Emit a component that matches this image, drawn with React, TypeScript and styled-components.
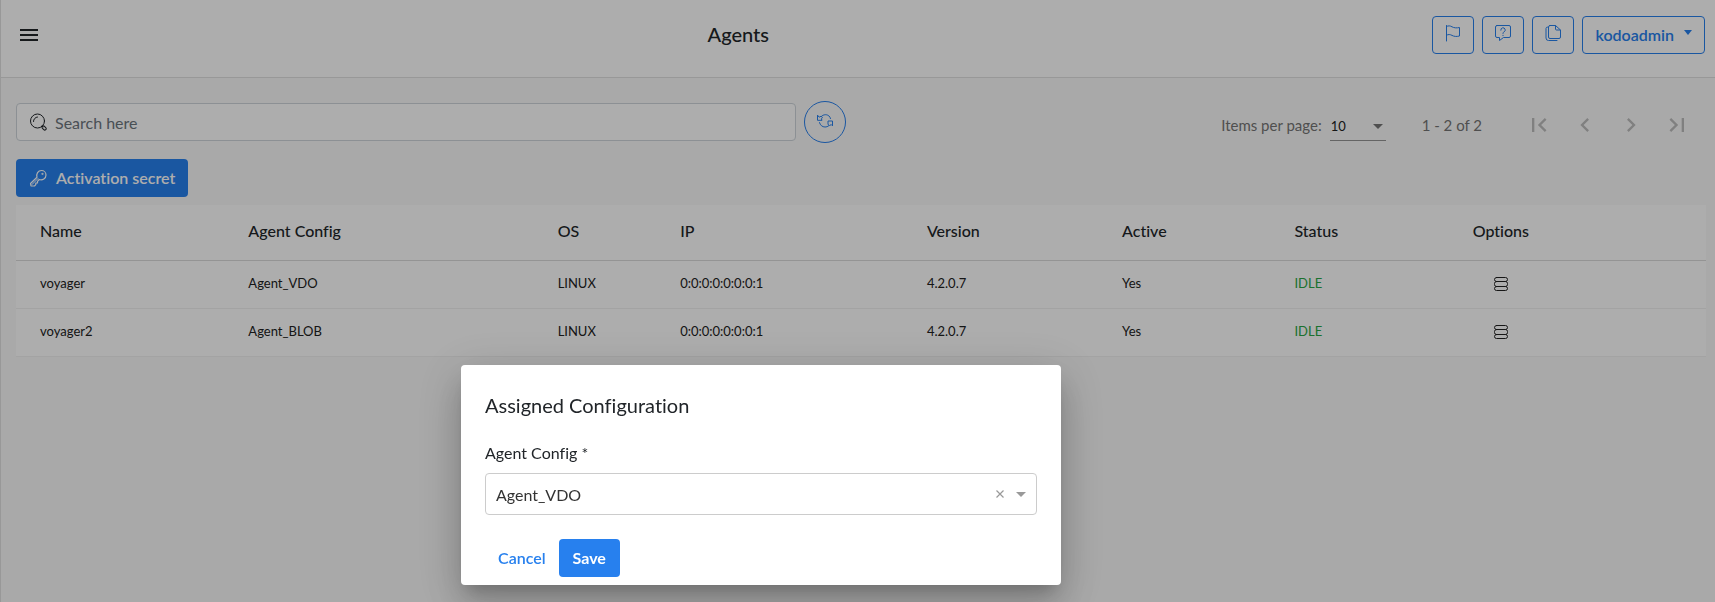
import React, { useState } from 'react';
import styled, { createGlobalStyle, css } from 'styled-components';

const primary = '#2780ee';
const line = '#e0e0e0';

const GlobalStyle = createGlobalStyle`
  * { box-sizing: border-box; }
  body {
    margin: 0;
    background: #fafafa;
    color: #212529;
    font-family: Lato, 'Open Sans', sans-serif;
    font-size: 16px;
    line-height: 24px;
    font-variant-ligatures: no-common-ligatures;
  }
  button, input, select { font: inherit; color: inherit; margin: 0; }
  button { cursor: pointer; }
  svg { display: block; flex: none; }
`;

const Page = styled.div`
  min-height: 100vh;
  border-left: 1px solid ${line};
`;

const Header = styled.header`
  display: flex;
  align-items: center;
  justify-content: space-between;
  height: 78px;
  padding: 0 10px 8px 13px;
  background: #fff;
  border-bottom: 1px solid ${line};
`;

const PageTitle = styled.h1`
  margin: 0;
  padding-bottom: 2px;
  font-size: 20px;
  line-height: 32px;
  font-weight: 500;
`;

const Actions = styled.div`
  display: flex;
  gap: 8px;
`;

const Button = styled.button<{ $kind?: 'solid' | 'outline' | 'text' }>`
  display: inline-flex;
  align-items: center;
  justify-content: center;
  gap: 9px;
  height: 38px;
  padding: 0 12px;
  border: 1px solid transparent;
  border-radius: 4px;
  font-weight: 600;
  color: ${primary};
  background: none;
  ${({ $kind }) => $kind === 'outline' && css`border-color: ${primary};`}
  ${({ $kind }) => $kind === 'solid' && css`background: ${primary}; color: #fff;`}
`;

const ActionIconButton = styled(Button)`
  width: 42px;
  padding: 0 0 4px;
`;

const PlainButton = styled.button<{ $size: number }>`
  display: inline-flex;
  align-items: center;
  justify-content: center;
  width: ${({ $size }) => $size}px;
  height: ${({ $size }) => $size}px;
  padding: 0;
  border: 0;
  background: none;
`;

const Content = styled.main`
  padding: 23px 9px 0 15px;
`;

const Toolbar = styled.div`
  display: grid;
  grid-template-columns: 1fr 1fr;
  align-items: center;
  margin-bottom: 16px;
`;

const SearchGroup = styled.div`
  display: flex;
  align-items: center;
  gap: 8px;
  padding-right: 15px;
`;

const SearchBox = styled.label`
  display: flex;
  flex: 1;
  align-items: center;
  gap: 8px;
  height: 38px;
  padding: 0 12px;
  border: 1px solid #ced4da;
  border-radius: 4px;
  background: #fff;
`;

const SearchInput = styled.input`
  flex: 1;
  min-width: 0;
  padding: 2px 0 0;
  border: 0;
  outline: 0;
  background: none;
  line-height: 24px;
  &::placeholder { color: #6c757d; opacity: 1; }
`;

const RoundButton = styled(Button)`
  width: 42px;
  height: 42px;
  padding: 0 0 2px;
  border-radius: 50%;
`;

const Paginator = styled.div`
  display: flex;
  align-items: center;
  justify-content: flex-end;
  padding: 2px 6px 0 0;
  font-size: 15px;
  color: #757575;
`;

const PageSize = styled.label`
  display: flex;
  align-items: center;
  gap: 8px;
  padding-top: 4px;
`;

const PageSizeField = styled.span`
  display: flex;
  align-items: center;
  width: 56px;
  padding: 7px 3px 4px 0;
  border-bottom: 1px solid #949494;
`;

const BareSelect = styled.select`
  flex: 1;
  min-width: 0;
  appearance: none;
  padding: 0;
  border: 0;
  outline: 0;
  background: none;
`;

const SizeSelect = styled(BareSelect)`
  padding-left: 1px;
  font-size: 13px;
  line-height: 20px;
  color: #212121;
`;

const Range = styled.span`
  margin: 0 34px 0 36px;
  padding-top: 4px;
`;

const NavButton = styled(PlainButton)`
  width: 46px;
  height: 40px;
  padding-top: 3px;
  color: #bdbdbd;
`;

const Table = styled.table`
  width: 100%;
  margin-top: 8px;
  table-layout: fixed;
  border-collapse: separate;
  border-spacing: 0;
  background: #fff;
  text-align: left;
`;

const Col = styled.col<{ $share: number }>`
  width: ${({ $share }) => $share}%;
`;

const HeadCell = styled.th`
  height: 56px;
  padding: 0 0 4px;
  border-bottom: 1px solid #dadada;
  font-weight: 500;
  &:first-child { padding-left: 24px; }
`;

const Cell = styled.td<{ $idle?: boolean }>`
  height: 48px;
  padding: 0 0 3px;
  border-bottom: 1px solid #f0f0f0;
  font-size: 13px;
  color: ${({ $idle }) => ($idle ? '#28a745' : '#212121')};
  &:first-child { padding-left: 24px; }
`;

const RowAction = styled(PlainButton)`
  margin-left: 16px;
  vertical-align: middle;
`;

const Backdrop = styled.div`
  position: fixed;
  inset: 0;
  display: flex;
  align-items: flex-end;
  padding: 0 0 17px 461px;
  background: rgba(0, 0, 0, 0.32);
`;

const Dialog = styled.form`
  width: 600px;
  padding: 24px 24px 8px;
  border-radius: 4px;
  background: #fff;
  box-shadow: 0 11px 15px -7px rgba(0, 0, 0, 0.2), 0 24px 38px 3px rgba(0, 0, 0, 0.14),
    0 9px 46px 8px rgba(0, 0, 0, 0.12);
`;

const DialogTitle = styled.h2`
  margin: 0 0 20px;
  font-size: 20px;
  line-height: 32px;
  font-weight: 400;
`;

const FieldLabel = styled.label`
  display: block;
  margin-bottom: 8px;
`;

const ConfigField = styled.div`
  display: flex;
  align-items: center;
  height: 42px;
  padding: 0 6px 0 10px;
  border: 1px solid #ccc;
  border-radius: 4px;
  color: #999;
`;

const ConfigSelect = styled(BareSelect)`
  height: 40px;
  padding-top: 2px;
  color: #333;
`;

const DialogActions = styled.div`
  display: flex;
  margin-top: 24px;
`;

const SaveButton = styled(Button)`
  padding: 0 13px;
  font-weight: 700;
`;

const Icon = ({ children, size = 18 }: { children: React.ReactNode; size?: number }) => (
  <svg width={size} height={size} viewBox={`0 0 ${size} ${size}`} fill="none" stroke="currentColor"
    strokeWidth="1" strokeLinecap="round" strokeLinejoin="round" aria-hidden="true">
    {children}
  </svg>
);

const MenuIcon = () => (
  <svg width="18" height="12" viewBox="0 0 18 12" fill="currentColor" aria-hidden="true">
    <path d="M0 0h18v2H0zM0 5h18v2H0zM0 10h18v2H0z" />
  </svg>
);

const FlagIcon = () => (
  <Icon>
    <path d="M2.500 17V1.500M2.500 2.500c2-1 3.500-.8 5.500.3s4.500 1.400 7.500.7v8.500c-3 .8-5.500.5-7.500-.6s-3.500-1.200-5.500-.2" />
  </Icon>
);

const HelpIcon = () => (
  <Icon>
    <path d="M3 1.500h12a1.500 1.500 0 0 1 1.500 1.500v9a1.500 1.500 0 0 1-1.500 1.500H9.500L5.500 16.500v-3H3A1.500 1.500 0 0 1 1.500 12V3A1.500 1.500 0 0 1 3 1.500z" />
    <path d="M6.800 6.200a2.200 2.200 0 1 1 3.300 1.700c-.8.400-1.100.8-1.100 1.600" />
    <path d="M9 11.300v.4" />
  </Icon>
);

const PagesIcon = () => (
  <Icon>
    <path d="M6 1.500h5.500l5 4.500v7a1.500 1.500 0 0 1-1.500 1.500H6A1.500 1.500 0 0 1 4.500 13V3A1.500 1.500 0 0 1 6 1.500z" />
    <path d="M11.500 1.700V5a1 1 0 0 0 1 1h3.800" />
    <path d="M3.500 3A1.500 1.500 0 0 0 2 4.500V14a2.500 2.500 0 0 0 2.500 2.500H13" />
  </Icon>
);

const SearchIcon = () => (
  <Icon>
    <circle cx="8.500" cy="8" r="7" />
    <path d="M4.500 8.500a4.200 4.200 0 0 1 4-4.500M13 13l1 .8" />
    <rect x="12.800" y="13.600" width="4.600" height="2.800" rx="1.400" transform="rotate(45 15.100 15)" />
  </Icon>
);

const KeyIcon = () => (
  <Icon>
    <path d="M8 8.200C7 5 9 1.500 12.500 1.500A4.500 4.500 0 0 1 17 6c0 3.500-3.500 5.500-6.700 4.500L8.500 12.300V14H6.800v1.700L5.500 17H2l-.5-2.500z" strokeWidth="1.200" />
    <path d="M3 15.500l6-6" />
    <circle cx="13.300" cy="4.900" r=".6" />
  </Icon>
);

const RefreshIcon = () => (
  <Icon>
    <path d="M5.500 4.300C7.500 2.200 11 2.200 13 4c.8.800 1.300 1.600 1.500 2.600M3.500 10.600C4.200 13.200 6.300 15 9 15c1.400 0 2.700-.4 3.800-1.300" />
    <path d="M1.500 3.500v4.800H6l-.6-1.500 1.100-1.300L5 4.300l-1.500.7zM16.500 13.500V9H12v3.500l1.500 1 1.500-.7z" />
  </Icon>
);

const StackIcon = () => (
  <Icon size={16}>
    <rect x="1.500" y="1.500" width="13" height="4" rx="2" />
    <rect x="1.500" y="5.500" width="13" height="5" rx="2" />
    <rect x="1.500" y="10.500" width="13" height="4" rx="2" />
  </Icon>
);

const Caret = ({ width = 8 }: { width?: number }) => (
  <svg width={width} height="5" viewBox="0 0 10 5" preserveAspectRatio="none" fill="currentColor" aria-hidden="true">
    <path d="M0 0h10L5 5z" />
  </svg>
);

const UserCaret = styled.span`
  padding: 0 0 4px 1px;
`;

const ClearIcon = () => (
  <svg width="8" height="8" viewBox="0 0 8 8" stroke="currentColor" strokeWidth="1.200" aria-hidden="true">
    <path d="M.5.500l7 7M7.500.500l-7 7" />
  </svg>
);

const navIcons = [
  ['First page', 'M18.410 16.590L13.820 12l4.590-4.590L17 6l-6 6 6 6zM6 6h2v12H6z'],
  ['Previous page', 'M15.410 7.410L14 6l-6 6 6 6 1.410-1.410L10.830 12z'],
  ['Next page', 'M10 6L8.590 7.410 13.170 12l-4.580 4.590L10 18l6-6z'],
  ['Last page', 'M5.590 7.410L10.180 12l-4.590 4.590L7 18l6-6-6-6zM16 6h2v12h-2z'],
];

const columns: [string, number][] = [
  ['Name', 13.75], ['Agent Config', 18.3], ['OS', 7.25], ['IP', 14.6],
  ['Version', 11.55], ['Active', 10.2], ['Status', 10.55], ['Options', 13.8],
];

const agents = [
  { name: 'voyager', config: 'Agent_VDO' },
  { name: 'voyager2', config: 'Agent_BLOB' },
];

export default function App() {
  const [config, setConfig] = useState('Agent_VDO');

  return (
    <>
      <GlobalStyle />
      <Page>
        <Header>
          <PlainButton $size={30} aria-label="Menu"><MenuIcon /></PlainButton>
          <PageTitle>Agents</PageTitle>
          <Actions>
            <ActionIconButton $kind="outline" aria-label="Flags"><FlagIcon /></ActionIconButton>
            <ActionIconButton $kind="outline" aria-label="Help"><HelpIcon /></ActionIconButton>
            <ActionIconButton $kind="outline" aria-label="Documents"><PagesIcon /></ActionIconButton>
            <Button $kind="outline">kodoadmin<UserCaret><Caret /></UserCaret></Button>
          </Actions>
        </Header>

        <Content>
          <Toolbar>
            <SearchGroup>
              <SearchBox>
                <SearchIcon />
                <SearchInput type="text" placeholder="Search here" aria-label="Search" />
              </SearchBox>
              <RoundButton $kind="outline" aria-label="Refresh"><RefreshIcon /></RoundButton>
            </SearchGroup>
            <Paginator>
              <PageSize>
                Items per page:
                <PageSizeField>
                  <SizeSelect defaultValue="10"><option>10</option><option>25</option><option>50</option></SizeSelect>
                  <Caret width={10} />
                </PageSizeField>
              </PageSize>
              <Range>1 - 2 of 2</Range>
              {navIcons.map(([label, d]) => (
                <NavButton key={label} $size={40} aria-label={label}>
                  <svg width="28" height="28" viewBox="0 0 24 24" fill="currentColor" aria-hidden="true"><path d={d} /></svg>
                </NavButton>
              ))}
            </Paginator>
          </Toolbar>

          <Button $kind="solid"><KeyIcon />Activation secret</Button>

          <Table>
            <colgroup>{columns.map(([label, share]) => <Col key={label} $share={share} />)}</colgroup>
            <thead>
              <tr>{columns.map(([label]) => <HeadCell key={label} scope="col">{label}</HeadCell>)}</tr>
            </thead>
            <tbody>
              {agents.map((agent) => (
                <tr key={agent.name}>
                  <Cell>{agent.name}</Cell>
                  <Cell>{agent.config}</Cell>
                  <Cell>LINUX</Cell>
                  <Cell>0:0:0:0:0:0:0:1</Cell>
                  <Cell>4.2.0.7</Cell>
                  <Cell>Yes</Cell>
                  <Cell $idle>IDLE</Cell>
                  <Cell><RowAction $size={24} aria-label={`Options for ${agent.name}`}><StackIcon /></RowAction></Cell>
                </tr>
              ))}
            </tbody>
          </Table>
        </Content>
      </Page>

      <Backdrop>
        <Dialog role="dialog" aria-modal="true" aria-labelledby="dialog-title" onSubmit={(e) => e.preventDefault()}>
          <DialogTitle id="dialog-title">Assigned Configuration</DialogTitle>
          <FieldLabel htmlFor="agent-config">Agent Config *</FieldLabel>
          <ConfigField>
            <ConfigSelect id="agent-config" value={config} onChange={(e) => setConfig(e.target.value)}>
              <option value="" />
              <option>Agent_VDO</option>
              <option>Agent_BLOB</option>
            </ConfigSelect>
            <PlainButton $size={24} type="button" aria-label="Clear" onClick={() => setConfig('')}><ClearIcon /></PlainButton>
            <PlainButton as="span" $size={18}><Caret width={10} /></PlainButton>
          </ConfigField>
          <DialogActions>
            <Button type="button">Cancel</Button>
            <SaveButton $kind="solid" type="submit">Save</SaveButton>
          </DialogActions>
        </Dialog>
      </Backdrop>
    </>
  );
}
